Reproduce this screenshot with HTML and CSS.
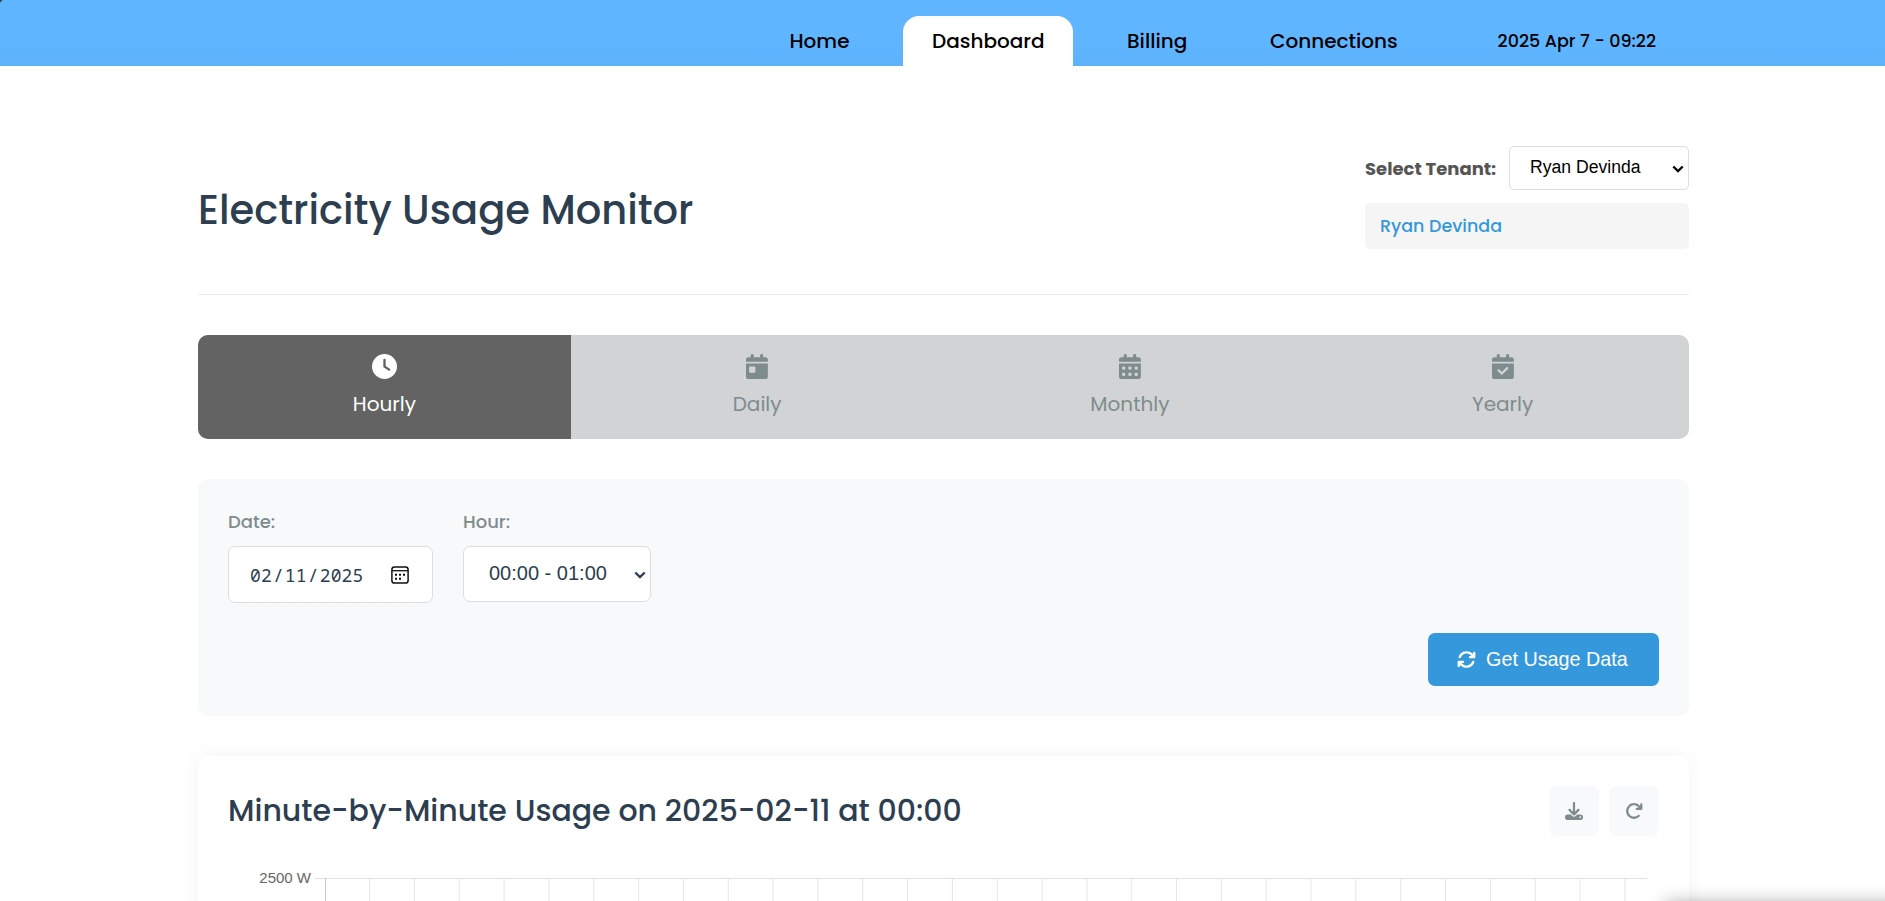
FILE: index.html
```html
<!DOCTYPE html>
<html lang="en">
<head>
<meta charset="utf-8">
<title>Electricity Usage Monitor</title>
<link rel="stylesheet" href="styles.css">
</head>
<body>
<div class="viewport">
<header class="topbar">
  <nav class="nav">
    <a class="nav-link home"><span>Home</span></a>
    <a class="nav-link active"><span>Dashboard</span></a>
    <a class="nav-link billing"><span>Billing</span></a>
    <a class="nav-link connections"><span>Connections</span></a>
  </nav>
  <span class="clock">2025 Apr 7 - 09:22</span>
</header>
<main class="page">
  <section class="page-head">
    <h1>Electricity Usage Monitor</h1>
    <div class="tenant">
      <div class="tenant-row">
        <label class="tenant-label">Select Tenant:</label>
        <div class="select tenant-select"><span>Ryan Devinda</span>
          <svg class="chev" viewBox="0 0 12 8"><path d="M1.3 1.5 6 6.1 10.7 1.5" fill="none" stroke="currentColor" stroke-width="2.3"/></svg>
        </div>
      </div>
      <div class="tenant-info"><span>Ryan Devinda</span></div>
    </div>
  </section>

  <section class="tabs">
    <div class="tab selected">
      <svg class="tab-icon" viewBox="0 0 512 512"><path fill="currentColor" d="M256 0a256 256 0 1 1 0 512A256 256 0 1 1 256 0zM232 120V256c0 8 4 15.500 10.700 20l96 64c11 7.400 25.900 4.400 33.300-6.700s4.400-25.900-6.700-33.300L280 243.200V120c0-13.300-10.700-24-24-24s-24 10.700-24 24z"/></svg>
      <span>Hourly</span>
    </div>
    <div class="tab">
      <svg class="tab-icon" viewBox="0 0 448 512"><path fill="currentColor" d="M128 0c17.700 0 32 14.300 32 32V64H288V32c0-17.700 14.300-32 32-32s32 14.300 32 32V64h48c26.500 0 48 21.500 48 48v48H0V112C0 85.500 21.500 64 48 64H96V32c0-17.700 14.300-32 32-32zM0 192H448V464c0 26.500-21.500 48-48 48H48c-26.500 0-48-21.500-48-48V192zm80 64c-8.800 0-16 7.200-16 16v96c0 8.800 7.200 16 16 16h96c8.800 0 16-7.200 16-16V272c0-8.800-7.200-16-16-16H80z"/></svg>
      <span>Daily</span>
    </div>
    <div class="tab">
      <svg class="tab-icon" viewBox="0 0 448 512"><path fill="currentColor" d="M128 0c17.700 0 32 14.300 32 32V64H288V32c0-17.700 14.300-32 32-32s32 14.300 32 32V64h48c26.500 0 48 21.500 48 48v48H0V112C0 85.500 21.500 64 48 64H96V32c0-17.700 14.300-32 32-32zM0 192H448V464c0 26.500-21.500 48-48 48H48c-26.500 0-48-21.500-48-48V192zM64 272v32c0 8.800 7.200 16 16 16h32c8.800 0 16-7.200 16-16V272c0-8.800-7.200-16-16-16H80c-8.800 0-16 7.200-16 16zm128 0v32c0 8.800 7.200 16 16 16h32c8.800 0 16-7.200 16-16V272c0-8.800-7.200-16-16-16H208c-8.800 0-16 7.200-16 16zm144-16c-8.800 0-16 7.200-16 16v32c0 8.800 7.200 16 16 16h32c8.800 0 16-7.200 16-16V272c0-8.800-7.200-16-16-16H336zM64 400v32c0 8.800 7.200 16 16 16h32c8.800 0 16-7.200 16-16V400c0-8.800-7.200-16-16-16H80c-8.800 0-16 7.200-16 16zm144-16c-8.800 0-16 7.200-16 16v32c0 8.800 7.200 16 16 16h32c8.800 0 16-7.200 16-16V400c0-8.800-7.200-16-16-16H208zm112 16v32c0 8.800 7.200 16 16 16h32c8.800 0 16-7.200 16-16V400c0-8.800-7.200-16-16-16H336c-8.800 0-16 7.200-16 16z"/></svg>
      <span>Monthly</span>
    </div>
    <div class="tab">
      <svg class="tab-icon" viewBox="0 0 448 512"><path fill="currentColor" d="M128 0c17.700 0 32 14.300 32 32V64H288V32c0-17.700 14.300-32 32-32s32 14.300 32 32V64h48c26.500 0 48 21.500 48 48v48H0V112C0 85.500 21.500 64 48 64H96V32c0-17.700 14.300-32 32-32zM0 192H448V464c0 26.500-21.500 48-48 48H48c-26.500 0-48-21.500-48-48V192zM329 305c9.400-9.400 9.400-24.600 0-33.900s-24.600-9.400-33.900 0l-95 95-47-47c-9.400-9.400-24.600-9.400-33.900 0s-9.400 24.600 0 33.900l64 64c9.400 9.400 24.600 9.400 33.900 0L329 305z"/></svg>
      <span>Yearly</span>
    </div>
  </section>

  <section class="filters">
    <div class="fields">
      <div class="field">
        <label>Date:</label>
        <div class="input date"><span class="segments"><span>02</span>/<span>11</span>/<span>2025</span></span>
          <svg class="cal" viewBox="0 0 18 18"><rect x=".9" y=".9" width="16.200" height="16.200" rx="2.600" fill="none" stroke="#111" stroke-width="1.500"/><path d="M1 4.700H17" stroke="#111" stroke-width="1.300"/><path fill="#111" d="M4 7.800h2v2H4zM8 7.800h2v2H8zM12 7.800h2v2h-2zM4 11.700h2v2H4zM8 11.700h2v2H8z"/></svg>
        </div>
      </div>
      <div class="field">
        <label>Hour:</label>
        <div class="select hour"><span>00:00 - 01:00</span>
          <svg class="chev" viewBox="0 0 12 8"><path d="M1.3 1.5 6 6.1 10.700 1.500" fill="none" stroke="currentColor" stroke-width="2.300"/></svg>
        </div>
      </div>
    </div>
    <button class="primary">
      <svg viewBox="0 0 512 512"><path fill="currentColor" d="M105.100 202.600c7.700-21.800 20.200-42.300 37.800-59.800c62.500-62.500 163.800-62.500 226.300 0L386.300 160H352c-17.700 0-32 14.300-32 32s14.300 32 32 32H463.500c17.700 0 32-14.300 32-32V80c0-17.700-14.300-32-32-32s-32 14.300-32 32v35.200L414.400 97.600c-87.500-87.500-229.300-87.500-316.800 0C73.200 122 55.600 150.700 44.800 181.400c-5.900 16.700 2.900 34.900 19.500 40.800s34.900-2.900 40.800-19.500zM39 289.300c-5 1.500-9.800 4.200-13.700 8.200c-4 4-6.700 8.800-8.100 14c-.7 2.500-1.200 5.300-1.200 8.500V432c0 17.700 14.300 32 32 32s32-14.300 32-32V396.900l17.600 17.500c87.500 87.400 229.300 87.400 316.700 0c24.400-24.400 42.100-53.100 52.900-83.700c5.900-16.700-2.900-34.900-19.500-40.800s-34.900 2.900-40.800 19.500c-7.700 21.800-20.200 42.300-37.800 59.800c-62.500 62.500-163.800 62.500-226.300 0L125.600 352H160c17.700 0 32-14.300 32-32s-14.300-32-32-32H48.400c-3.200 0-6.400.4-9.400 1.300z"/></svg>
      <span>Get Usage Data</span>
    </button>
  </section>

  <section class="chart-card">
    <div class="chart-head">
      <h2>Minute-by-Minute Usage on 2025-02-11 at 00:00</h2>
      <div class="actions">
        <span class="icon-btn"><svg viewBox="0 0 512 512"><path fill="currentColor" d="M288 32c0-17.700-14.300-32-32-32s-32 14.300-32 32V274.700l-73.400-73.400c-12.500-12.500-32.800-12.500-45.300 0s-12.500 32.800 0 45.300l128 128c12.500 12.500 32.800 12.500 45.300 0l128-128c12.500-12.500 12.500-32.800 0-45.300s-32.800-12.500-45.300 0L288 274.700V32zM64 352c-35.300 0-64 28.700-64 64v32c0 35.300 28.700 64 64 64H448c35.300 0 64-28.700 64-64V416c0-35.300-28.700-64-64-64H346.500l-45.300 45.300c-25 25-65.500 25-90.500 0L165.500 352H64zm368 56a24 24 0 1 1 0 48 24 24 0 1 1 0-48z"/></svg></span>
        <span class="icon-btn"><svg viewBox="0 0 512 512"><path fill="currentColor" d="M386.300 160H336c-17.700 0-32 14.300-32 32s14.300 32 32 32H464c17.700 0 32-14.300 32-32V64c0-17.700-14.300-32-32-32s-32 14.300-32 32v51.200L414.400 97.600c-87.500-87.500-229.300-87.500-316.800 0s-87.500 229.300 0 316.800s229.300 87.500 316.800 0c12.500-12.500 12.500-32.800 0-45.300s-32.800-12.500-45.300 0c-62.500 62.500-163.800 62.500-226.300 0s-62.500-163.800 0-226.300s163.800-62.500 226.300 0L386.300 160z"/></svg></span>
      </div>
    </div>
    <div class="chart">
      <span class="axis-label">2500 W</span>
      <svg class="plot" viewBox="0 0 1332 60">
        <defs><pattern id="grid" width="44.830" height="60" patternUnits="userSpaceOnUse" x="9.300"><path d="M.5 0V60" stroke="#e5e5e5"/></pattern></defs>
        <rect x="11" width="1314" height="60" fill="url(#grid)"/>
        <path d="M0 .5H1332" stroke="#e1e1e1"/>
        <path d="M10.500 0V60" stroke="#c8c8c8"/>
      </svg>
    </div>
  </section>
</main>
<div class="corner-shadow"></div>
</div>
</body>
</html>
```
FILE: styles.css
```css
* { box-sizing: border-box; }
body { margin: 0; background: #fff; color: #2c3e50; font-family: Poppins, Inter, sans-serif; }
.viewport { position: relative; height: 901px; overflow: hidden; }
h1, h2 { margin: 0; font-weight: 500; white-space: nowrap; }
span, label { white-space: nowrap; }
svg { display: block; flex: none; }

.topbar { height: 66px; padding: 16px 229px 0 761px; display: flex; justify-content: space-between; background: radial-gradient(circle at 5px 5px, transparent 5px, #3c4650 5.5px) 0 0 / 5px 5px no-repeat, linear-gradient(#5fb5ff 70%, #5eb2fc); color: #000; }
.nav { display: flex; gap: 25px; }
.nav-link { height: 50px; padding: 0 29px; display: flex; align-items: center; font-size: 20px; font-weight: 500; }
.nav-link.active { width: 170px; background: #fff; border-radius: 16px 16px 0 0; }
.nav-link.home { width: 117px; padding: 0 28.5px; }
.billing { width: 118px; }
.clock { font-size: 17.5px; font-weight: 500; line-height: 50px; }

.page { padding: 80px 196px 0 198px; }
.page-head { height: 149px; display: flex; justify-content: space-between; border-bottom: 1px solid #ececec; }
h1 { font-size: 40px; line-height: 60px; padding-top: 34px; }
.tenant { width: 324px; }
.tenant-row { display: flex; align-items: center; justify-content: space-between; }
.tenant-label { font-size: 18px; font-weight: 700; color: #555; }
.select, .input { display: flex; align-items: center; justify-content: space-between; background: #fff; border: 1px solid #ddd; font-family: "Liberation Sans", Arial, sans-serif; }
.tenant-select { width: 180px; height: 44px; padding: 0 4px 1px 20px; border-radius: 5px; font-size: 17.6px; color: #000; }
.chev { width: 12px; height: 8px; margin-top: 2px; }
.tenant-info { height: 46px; margin-top: 13px; padding: 0 15px 1px; display: flex; align-items: center; background: #f5f5f5; border-radius: 5px; color: #3498db; font-size: 17.5px; font-weight: 500; }

.tabs { height: 104px; margin-top: 40px; display: grid; grid-template-columns: repeat(4, 1fr); background: #d1d3d4; border-radius: 10px; overflow: hidden; color: #7f8c8d; }
.tab { display: flex; flex-direction: column; align-items: center; padding-top: 19px; font-size: 20px; }
.tab.selected { background: #636363; color: #fff; }
.tab-icon { height: 25px; width: auto; margin-bottom: 10px; }
.tab span { line-height: 30px; }

.filters { height: 237px; margin-top: 40px; padding: 30px; background: #f8f9fb; border-radius: 10px; display: flex; flex-direction: column; justify-content: space-between; align-items: flex-end; }
.fields { width: 100%; display: flex; gap: 30px; }
.field label { display: block; height: 37px; line-height: 26px; font-size: 18px; font-weight: 500; color: #7f8c8d; }
.input, .hour { border-radius: 7px; color: #2c3e50; }
.date { width: 205px; height: 57px; padding: 0 23px 0 20px; font-family: "Noto Sans Mono", "DejaVu Sans Mono", monospace; font-size: 18px; }
.segments { display: flex; letter-spacing: .15px; }
.segments span { padding: 0 1px; }
.cal { width: 18px; height: 18px; }
.hour { width: 188px; height: 56px; padding: 0 4px 1px 25px; font-size: 20px; }
.primary { width: 231px; height: 53px; border: 0; border-radius: 7px; background: #3598dc; color: #fff; display: flex; align-items: center; gap: 10px; padding: 0 0 1px 29px; font: 19.8px "Liberation Sans", Arial, sans-serif; }
.primary svg { width: 19px; height: 19px; }

.chart-card { height: 300px; margin-top: 40px; padding: 30px; border-radius: 10px; background: #fff; box-shadow: 0 0 20px rgba(0,0,0,.05); }
.chart-head { height: 50px; display: flex; align-items: center; justify-content: space-between; }
h2 { font-size: 30px; }
.actions { display: flex; gap: 10px; }
.icon-btn { width: 50px; height: 50px; border-radius: 8px; background: #f8f9fb; color: #7f8c8d; display: grid; place-items: center; }
.icon-btn svg { width: 18px; height: 18px; }
.chart { display: flex; justify-content: flex-end; gap: 4px; padding-right: 12px; margin-top: 32px; }
.axis-label { font: 15px/20px "Liberation Sans", Arial, sans-serif; color: #666; }
.plot { width: 1332px; height: 60px; margin-top: 10px; }
.corner-shadow { position: absolute; left: 1665px; top: 903px; width: 260px; height: 40px; box-shadow: 0 0 18px rgba(0,0,0,.35); }
```
